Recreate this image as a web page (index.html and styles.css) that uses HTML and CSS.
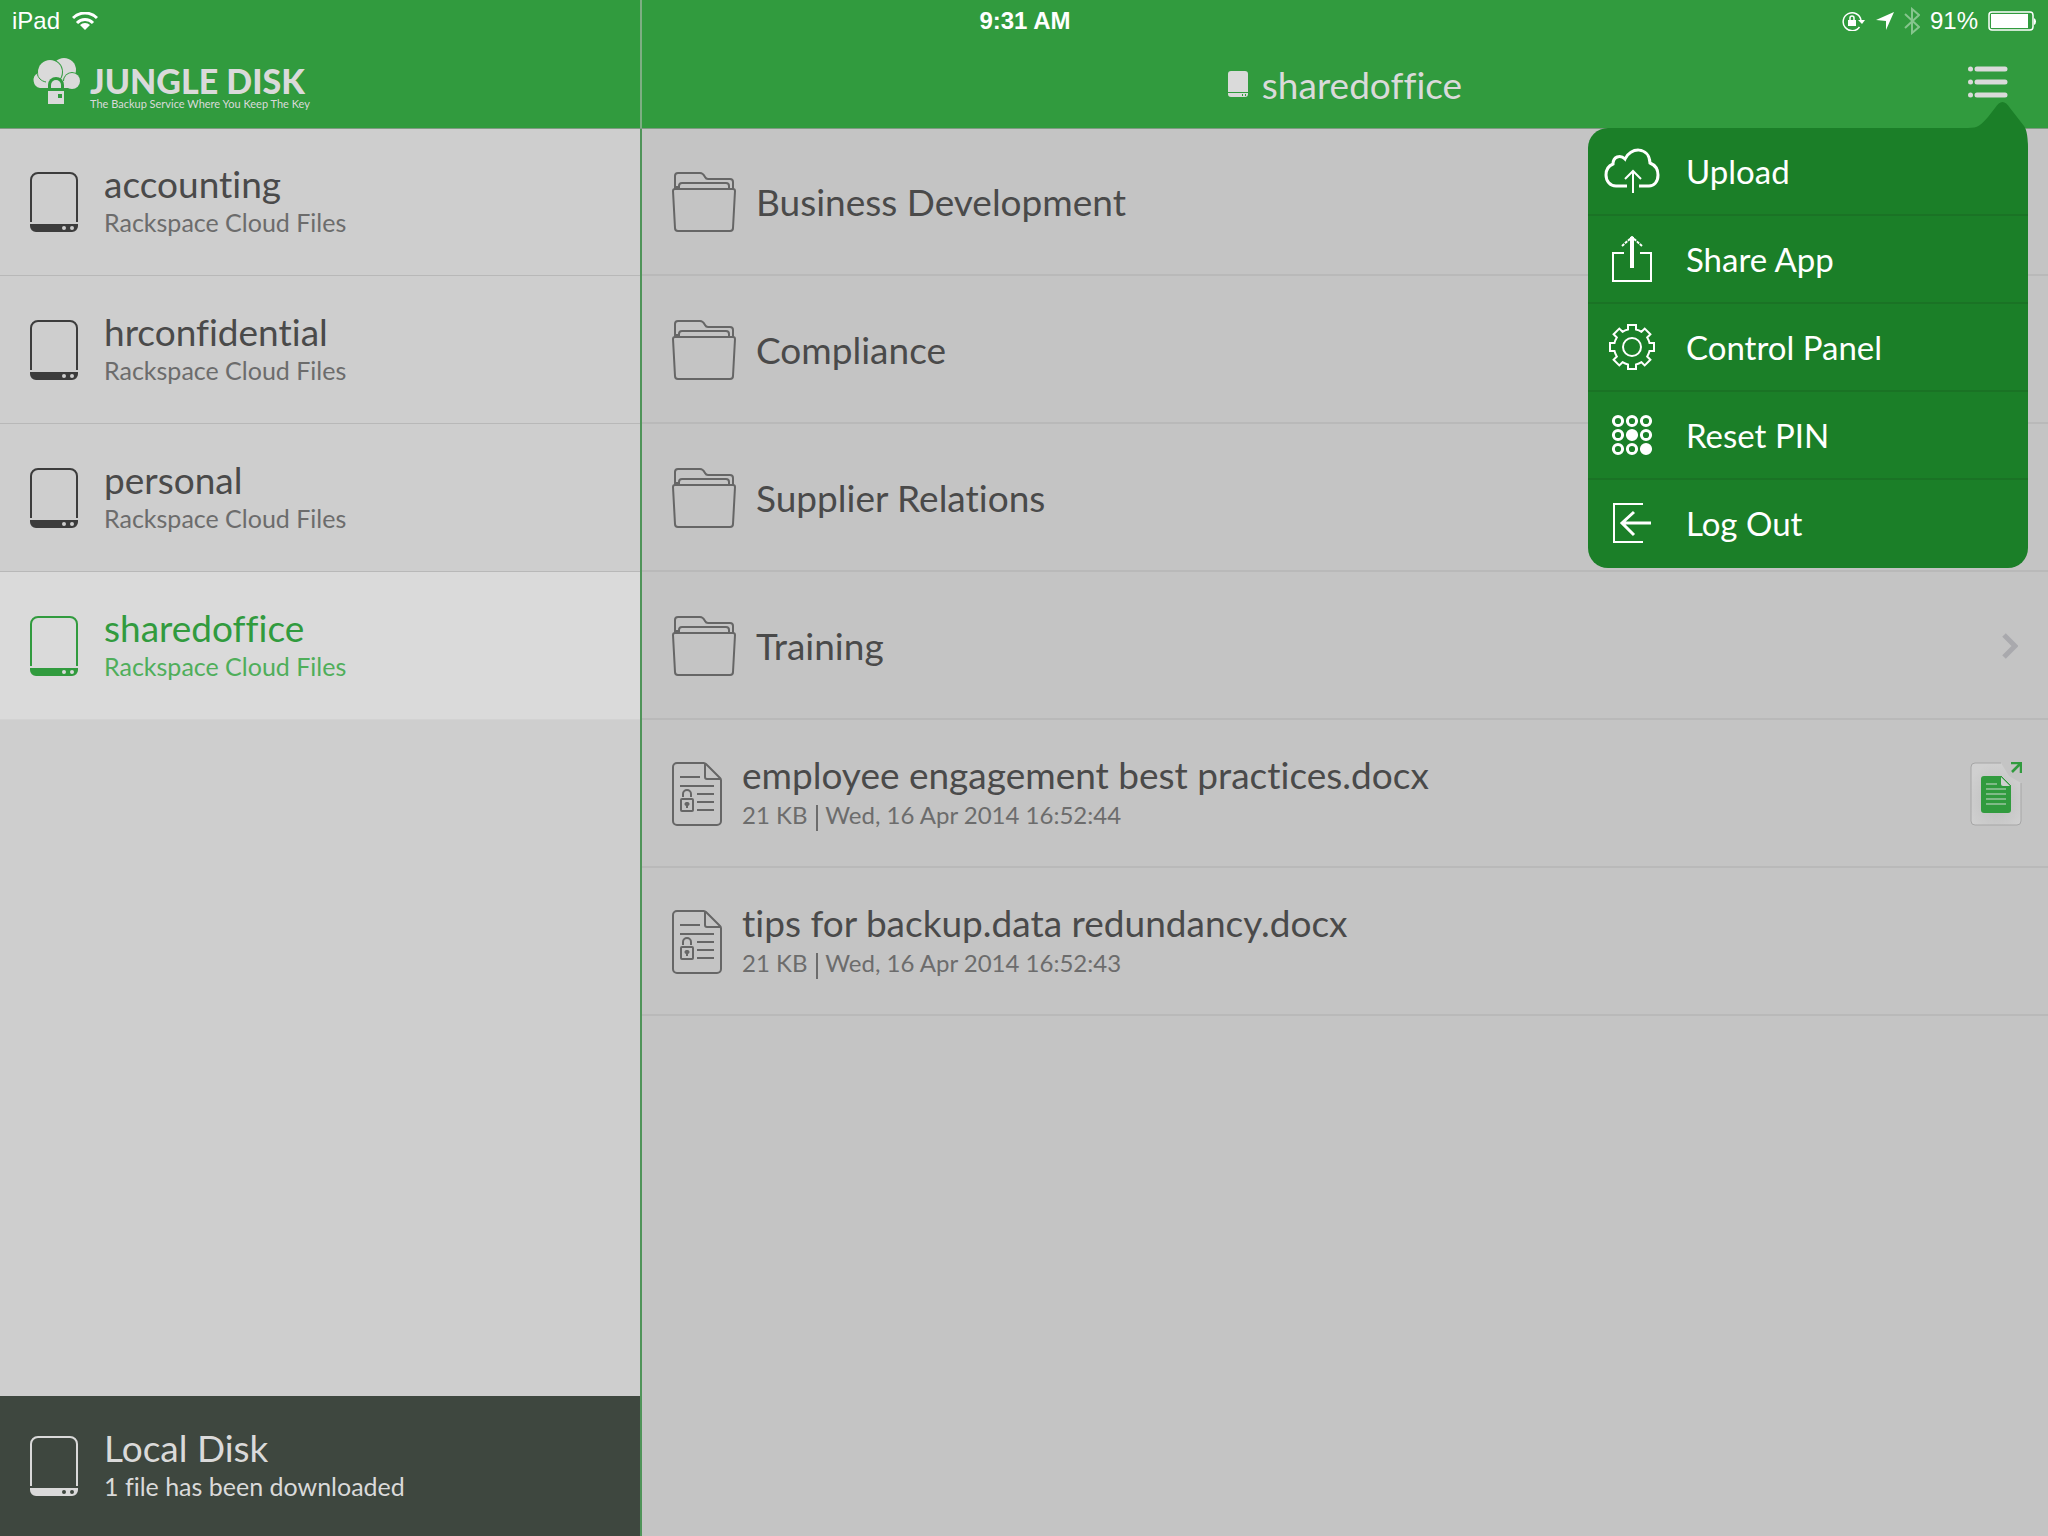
FILE: index.html
```html
<!DOCTYPE html>
<html lang="en">
<head>
<meta charset="utf-8">
<title>Jungle Disk</title>
<meta name="viewport" content="width=device-width, initial-scale=1">
<link rel="stylesheet" href="styles.css">
</head>
<body>
<svg class="sprite" aria-hidden="true">
  <symbol id="disk" viewBox="0 0 48 60">
    <path d="M1 50V8a7 7 0 0 1 7-7h32a7 7 0 0 1 7 7v42" fill="none" stroke="currentColor" stroke-width="2"/>
    <path fill-rule="evenodd" d="M0 52h48v2a6 6 0 0 1-6 6H6a6 6 0 0 1-6-6zM34 54a2 2 0 1 0 0 4 2 2 0 0 0 0-4zM42 54a2 2 0 1 0 0 4 2 2 0 0 0 0-4z" fill="currentColor"/>
  </symbol>
  <symbol id="folder" viewBox="0 0 64 60">
    <g fill="none" stroke="currentColor" stroke-width="2">
      <path d="M3 17V4a3 3 0 0 1 3-3h22c3 0 4 2 5 4s2 2 3 2h22a3 3 0 0 1 3 3v7"/>
      <path d="M7 17v-3a3 3 0 0 1 3-3h44a3 3 0 0 1 3 3v3"/>
      <path d="M3 15h4"/>
      <path d="M3 17h58a2 2 0 0 1 2 2l-2 37a3 3 0 0 1-3 3H6a3 3 0 0 1-3-3L1 19a2 2 0 0 1 2-2z"/>
    </g>
  </symbol>
  <symbol id="doc" viewBox="0 0 50 64">
    <g fill="none" stroke="currentColor" stroke-width="2">
      <path d="M5 1h26a4 4 0 0 1 3 1l14 14a4 4 0 0 1 1 3v40a4 4 0 0 1-4 4H5a4 4 0 0 1-4-4V5a4 4 0 0 1 4-4z"/>
      <path d="M33 2v13a2 2 0 0 0 2 2h13M8 15h20M8 24h34M25 32h17M25 40h17M25 48h17"/>
      <rect x="9" y="37" width="12" height="12" rx="1"/>
      <path d="M11 35v-3a4 4 0 0 1 8 0v3"/>
    </g>
    <path d="M15 40a2 2 0 0 1 1 4v2h-2v-2a2 2 0 0 1 1-4z" fill="currentColor"/>
  </symbol>
  <symbol id="chevron" viewBox="0 0 16 26">
    <path d="M2 2l11 11L2 24" fill="none" stroke="currentColor" stroke-width="5"/>
  </symbol>
</svg>

<div class="app">
  <div class="brand">
    <svg class="brand-mark" viewBox="0 0 48 46" aria-hidden="true">
      <circle cx="32" cy="12" r="12" fill="#dadada"/>
      <circle cx="40" cy="23" r="9" fill="#319b3e"/>
      <circle cx="40" cy="23" r="8" fill="#dadada"/>
      <circle cx="18" cy="14" r="13" fill="#319b3e"/>
      <circle cx="18" cy="14" r="12" fill="#dadada"/>
      <path d="M6 15c1 5 5 8 10 8h22v7H8a8 8 0 0 1-2-15z" fill="#dadada"/>
      <path d="M5 15c1 5 4 8 9 9" fill="none" stroke="#319b3e"/>
      <path d="M16 31v-4a8 8 0 0 1 16 0v4z" fill="#319b3e"/>
      <path d="M19 30v-3a5 5 0 0 1 10 0v3z" fill="#dadada"/>
      <path fill-rule="evenodd" d="M16 33h16v13H16zM26 36v4h4v-4z" fill="#dadada"/>
    </svg>
    <div class="brand-text">
      <span class="brand-name">JUNGLE DISK</span>
      <span class="brand-line">The Backup Service Where You Keep The Key</span>
    </div>
  </div>

  <header class="titlebar">
    <h1 class="title">
      <svg class="title-icon" viewBox="0 0 20 26" aria-hidden="true"><path d="M3 0h14a3 3 0 0 1 3 3v18H0V3a3 3 0 0 1 3-3z" fill="currentColor"/><path fill-rule="evenodd" d="M0 22h20v1a3 3 0 0 1-3 3H3a3 3 0 0 1-3-3zM14 23v2h1v-2zM17 23v2h1v-2z" fill="currentColor"/></svg>
      sharedoffice
    </h1>
    <div class="menu-anchor">
      <button class="menu-button" type="button" aria-label="Menu" aria-expanded="true">
        <svg viewBox="0 0 40 32" aria-hidden="true"><g fill="currentColor"><circle cx="2.500" cy="3" r="2.500"/><circle cx="2.500" cy="16" r="2.500"/><circle cx="2.500" cy="29" r="2.500"/></g><path d="M9 3h28M9 16h28M9 29h28" stroke="currentColor" stroke-width="5" stroke-linecap="round"/></svg>
      </button>
      <div class="popover">
        <svg class="popover-tip" viewBox="0 0 60 48" aria-hidden="true"><path d="M0 26c10 0 13-3 20-11l7-9c5-8 10-8 15 0l14 18c3 4 4 12 4 24H0z" fill="currentColor"/></svg>
        <button class="menu-item" type="button">
          <svg class="menu-icon" viewBox="0 0 56 46" aria-hidden="true"><g fill="none" stroke="currentColor" stroke-width="2"><path stroke-width="3" d="M23 38H12C6 38 2 33 2 27c0-5 2-9 7-11 0-7 7-10 12-5 5-12 24-13 25 4 5 2 8 6 8 12 0 7-4 11-9 11H35"/><path d="M29 45V24M21 31l8-8 8 8"/></g></svg>
          Upload
        </button>
        <button class="menu-item" type="button">
          <svg class="menu-icon" viewBox="0 0 56 46" aria-hidden="true"><g fill="none" stroke="currentColor" stroke-width="2"><path d="M20 17H9v28h38V17H36"/><path d="M18 10l10-9 10 9" stroke-dasharray="3 1"/><path d="M28 1v31" stroke-width="4"/></g></svg>
          Share App
        </button>
        <button class="menu-item" type="button">
          <svg class="menu-icon" viewBox="-28 -23 56 46" aria-hidden="true"><g fill="none" stroke="currentColor" stroke-width="2"><path d="M-4-22H4V-17.500A18 18 0 0 1 9.500-15.200L12.700-18.400 18.400-12.700 15.200-9.500A18 18 0 0 1 17.500-4H22V4H17.500A18 18 0 0 1 15.200 9.500L18.400 12.700 12.700 18.400 9.500 15.200A18 18 0 0 1 4 17.500V22H-4V17.500A18 18 0 0 1-9.500 15.200L-12.700 18.400-18.400 12.700-15.200 9.500A18 18 0 0 1-17.500 4H-22V-4H-17.500A18 18 0 0 1-15.200-9.500L-18.400-12.700-12.700-18.400-9.500-15.200A18 18 0 0 1-4-17.500z"/><circle r="9"/></g></svg>
          Control Panel
        </button>
        <button class="menu-item" type="button">
          <svg class="menu-icon" viewBox="0 0 56 46" aria-hidden="true"><g fill="none" stroke="currentColor" stroke-width="3"><circle cx="14" cy="9" r="4.600"/><circle cx="28" cy="9" r="4.600"/><circle cx="42" cy="9" r="4.600"/><circle cx="14" cy="23" r="4.600"/><circle cx="28" cy="23" r="4.600" fill="currentColor"/><circle cx="42" cy="23" r="4.600"/><circle cx="14" cy="37" r="4.600"/><circle cx="28" cy="37" r="4.600"/><circle cx="42" cy="37" r="4.600" fill="currentColor"/></g></svg>
          Reset PIN
        </button>
        <button class="menu-item" type="button">
          <svg class="menu-icon" viewBox="0 0 56 46" aria-hidden="true"><g fill="none" stroke="currentColor" stroke-width="2"><path d="M39 4H10v38h29"/><path d="M18 23h29M30 12L18 23l12 12" stroke-width="3"/></g></svg>
          Log Out
        </button>
      </div>
    </div>
  </header>

  <div class="status">
    <div class="status-left">
      iPad
      <svg class="wifi" viewBox="0 0 26 18" aria-hidden="true"><g fill="none" stroke="currentColor" stroke-width="3"><path d="M1 6a17 17 0 0 1 24 0"/><path d="M5 11a11 11 0 0 1 16 0"/></g><path d="M8 13a7 7 0 0 1 10 0l-5 5z" fill="currentColor"/></svg>
    </div>
    <div class="status-time">9:31 AM</div>
    <div class="status-right">
      <svg class="lock" viewBox="0 0 24 20" aria-hidden="true"><path d="M17.500 16A9 9 0 1 1 19 9" fill="none" stroke="currentColor" stroke-width="1.500"/><path d="M16 9h7l-3 4z" fill="currentColor"/><path d="M6 9h8v6H6z" fill="currentColor"/><path d="M8 9V7a2 2 0 0 1 4 0v2" fill="none" stroke="currentColor" stroke-width="1.500"/></svg>
      <svg class="locate" viewBox="0 0 18 18" aria-hidden="true"><path d="M18 0L10 18V9L0 8z" fill="currentColor"/></svg>
      <svg class="bluetooth" viewBox="0 0 16 28" aria-hidden="true"><path d="M1 7l14 13-7 6V2l7 6L1 21" fill="none" stroke="currentColor" stroke-width="2"/></svg>
      <span>91%</span>
      <svg class="battery" viewBox="0 0 50 20" aria-hidden="true"><rect x="1" y="1" width="44" height="18" rx="3" fill="none" stroke="currentColor" stroke-width="1.500"/><path d="M3 3h37v14H3zM46 7a4 4 0 0 1 0 7z" fill="currentColor"/></svg>
    </div>
  </div>

  <nav class="sidebar" aria-label="Disks">
    <a class="disk" href="#accounting"><svg class="disk-icon" aria-hidden="true"><use href="#disk"/></svg><span class="labels"><span class="name">accounting</span><span class="detail">Rackspace Cloud Files</span></span></a>
    <a class="disk" href="#hrconfidential"><svg class="disk-icon" aria-hidden="true"><use href="#disk"/></svg><span class="labels"><span class="name">hrconfidential</span><span class="detail">Rackspace Cloud Files</span></span></a>
    <a class="disk" href="#personal"><svg class="disk-icon" aria-hidden="true"><use href="#disk"/></svg><span class="labels"><span class="name">personal</span><span class="detail">Rackspace Cloud Files</span></span></a>
    <a class="disk disk-current" href="#sharedoffice" aria-current="page"><svg class="disk-icon" aria-hidden="true"><use href="#disk"/></svg><span class="labels"><span class="name">sharedoffice</span><span class="detail">Rackspace Cloud Files</span></span></a>
    <a class="disk disk-local" href="#local"><svg class="disk-icon" aria-hidden="true"><use href="#disk"/></svg><span class="labels"><span class="name">Local Disk</span><span class="detail">1 file has been downloaded</span></span></a>
  </nav>

  <main class="files">
    <a class="row" href="#business-development"><svg class="folder-icon" aria-hidden="true"><use href="#folder"/></svg><span class="name">Business Development</span><svg class="chevron" aria-hidden="true"><use href="#chevron"/></svg></a>
    <a class="row" href="#compliance"><svg class="folder-icon" aria-hidden="true"><use href="#folder"/></svg><span class="name">Compliance</span><svg class="chevron" aria-hidden="true"><use href="#chevron"/></svg></a>
    <a class="row" href="#supplier-relations"><svg class="folder-icon" aria-hidden="true"><use href="#folder"/></svg><span class="name">Supplier Relations</span><svg class="chevron" aria-hidden="true"><use href="#chevron"/></svg></a>
    <a class="row" href="#training"><svg class="folder-icon" aria-hidden="true"><use href="#folder"/></svg><span class="name">Training</span><svg class="chevron" aria-hidden="true"><use href="#chevron"/></svg></a>
    <div class="row">
      <svg class="doc-icon" aria-hidden="true"><use href="#doc"/></svg>
      <span class="labels"><span class="name">employee engagement best practices.docx</span><span class="detail">21 KB <span class="bar"></span> Wed, 16 Apr 2014 16:52:44</span></span>
      <button class="open" type="button" aria-label="Open downloaded file">
        <svg viewBox="0 0 52 64" aria-hidden="true">
          <defs><radialGradient id="glow" cx="50%" cy="60%" r="60%"><stop offset="0" stop-color="#bebebe"/><stop offset="1" stop-color="#d0d0d0"/></radialGradient></defs>
          <path d="M31 1H5a4 4 0 0 0-4 4v54a4 4 0 0 0 4 4h42a4 4 0 0 0 4-4V21L39 14z" fill="url(#glow)"/>
          <path d="M31 1H5a4 4 0 0 0-4 4v54a4 4 0 0 0 4 4h42a4 4 0 0 0 4-4V21" fill="none" stroke="#a6a6a6"/>
          <path d="M14 14h17l10 10v24a3 3 0 0 1-3 3H14a3 3 0 0 1-3-3V17a3 3 0 0 1 3-3z" fill="#319b3e"/>
          <path d="M31 15v7a2 2 0 0 0 2 2h7z" fill="#d0d0d0"/>
          <path d="M31 14l10 10" stroke="#319b3e"/>
          <path d="M16 22h11M16 27h20M16 32h20M16 37h20M16 42h20" stroke="#cdd8ce" stroke-width="1"/>
          <path d="M42 10l8-8M41 1h11M51 0v11" stroke="#319b3e" stroke-width="2.500" fill="none"/>
        </svg>
      </button>
    </div>
    <div class="row">
      <svg class="doc-icon" aria-hidden="true"><use href="#doc"/></svg>
      <span class="labels"><span class="name">tips for backup.data redundancy.docx</span><span class="detail">21 KB <span class="bar"></span> Wed, 16 Apr 2014 16:52:43</span></span>
    </div>
  </main>
</div>
</body>
</html>
```
FILE: styles.css
```css
* { box-sizing: border-box; }

body {
  margin: 0;
  font-family: Lato, "Open Sans", sans-serif;
  font-variant-ligatures: none;
  color: #4a4a4a;
}

a { color: inherit; text-decoration: none; }

button {
  margin: 0;
  padding: 0;
  border: 0;
  background: none;
  color: inherit;
  font: inherit;
  cursor: pointer;
}

svg { display: block; flex: none; }

.sprite { position: absolute; width: 0; height: 0; }

.app {
  display: grid;
  grid-template-columns: 31.25% 1fr;
  grid-template-rows: 40px 88px 1fr;
  min-height: 100vh;
}

/* header */
.brand,
.titlebar {
  grid-row: 1 / 3;
  background: #319b3e;
  color: #dadada;
  z-index: 1;
  box-shadow: 0 1px 0 #7f9a82;
}

.brand {
  grid-column: 1;
  display: flex;
  align-items: flex-start;
  gap: 10px;
  padding: 58px 32px 0;
}

.brand-mark { width: 48px; height: 46px; }

.brand-text { display: flex; flex-direction: column; padding-top: 6px; }

.brand-name { font-size: 34px; line-height: 34px; font-weight: 900; }

.brand-line { font-size: 11px; line-height: 12px; white-space: nowrap; }

.titlebar {
  grid-column: 2;
  display: flex;
  align-items: center;
  justify-content: center;
  padding-top: 42px;
  border-left: 2px solid #7dae82;
}

.title {
  display: flex;
  align-items: center;
  gap: 14px;
  margin: 0;
  font-size: 37px;
  line-height: 48px;
  font-weight: 400;
}

.title-icon { width: 20px; height: 26px; margin-bottom: 2px; }

.menu-anchor { position: absolute; top: 66px; right: 40px; }

.menu-button { display: block; color: #dadada; }

.menu-button svg { width: 40px; height: 32px; }

.popover {
  position: absolute;
  top: 62px;
  right: -20px;
  width: 440px;
  border-radius: 20px;
  background: #1b7f28;
  color: #1b7f28;
}

.popover-tip {
  position: absolute;
  top: -26px;
  right: 0;
  width: 60px;
  height: 48px;
}

.menu-item {
  position: relative;
  display: flex;
  align-items: center;
  gap: 26px;
  width: 100%;
  height: 88px;
  padding: 0 16px;
  border-bottom: 2px solid #1a7325;
  color: #fff;
  font-size: 33px;
  line-height: 40px;
  text-align: left;
}

.menu-item:last-child { border-bottom-color: transparent; }

.menu-icon { width: 56px; height: 46px; }

/* status bar, laid over both header halves */
.status {
  grid-row: 1;
  grid-column: 1 / 3;
  z-index: 1;
  display: grid;
  grid-template-columns: 1fr auto 1fr;
  align-items: center;
  padding: 2px 10px 0 12px;
  color: #fff;
  font-family: "Liberation Sans", Arial, sans-serif;
  font-size: 24px;
  line-height: 28px;
}

.status-left,
.status-right { display: flex; align-items: center; }

.status-left { gap: 12px; }

.status-right { justify-content: flex-end; gap: 10px; }

.status-time { font-weight: 700; }

.wifi { width: 26px; height: 18px; }
.lock { width: 24px; height: 20px; }
.locate { width: 18px; height: 18px; }
.bluetooth { width: 16px; height: 28px; color: #86c58d; }
.battery { width: 50px; height: 20px; }

/* disks */
.sidebar {
  grid-row: 3;
  grid-column: 1;
  display: flex;
  flex-direction: column;
  background: #cecece;
}

.disk {
  display: flex;
  align-items: center;
  gap: 26px;
  height: 148px;
  padding: 0 30px;
  border-bottom: 1px solid #b8b8b8;
}

.disk-icon { width: 48px; height: 60px; color: #3c3c3c; }

.labels { display: flex; flex-direction: column; }

.name { font-size: 37px; line-height: 40px; }

.detail { font-size: 25px; line-height: 36px; color: #6c6c6c; }

.disk-current {
  background: #dadada;
  border-bottom-color: #d2d2d2;
  color: #319b3e;
}

.disk-current .disk-icon { color: #319b3e; }

.disk-current .detail { color: #4fae5a; }

.disk-local {
  height: 140px;
  margin-top: auto;
  border: 0;
  background: #3e473f;
  color: #dadada;
}

.disk-local .disk-icon,
.disk-local .detail { color: #dadada; }

/* files */
.files {
  grid-row: 3;
  grid-column: 2;
  border-left: 2px solid #4f9459;
  background: #c4c4c4;
}

.row {
  display: flex;
  align-items: center;
  gap: 20px;
  height: 148px;
  padding: 2px 26px 0 30px;
  border-bottom: 2px solid #b9b9b9;
}

.row .labels { gap: 2px; }

.row .detail { font-size: 24px; }

.folder-icon { width: 64px; height: 60px; color: #666; }
.doc-icon { width: 50px; height: 64px; color: #666; }

.chevron {
  width: 16px;
  height: 26px;
  margin: 0 4px 0 auto;
  color: #a9a9ad;
}

.bar {
  display: inline-block;
  width: 2px;
  height: 26px;
  margin: 0 2px;
  background: #6c6c6c;
  vertical-align: middle;
}

.open { margin-left: auto; }

.open svg { width: 52px; height: 64px; }
```
